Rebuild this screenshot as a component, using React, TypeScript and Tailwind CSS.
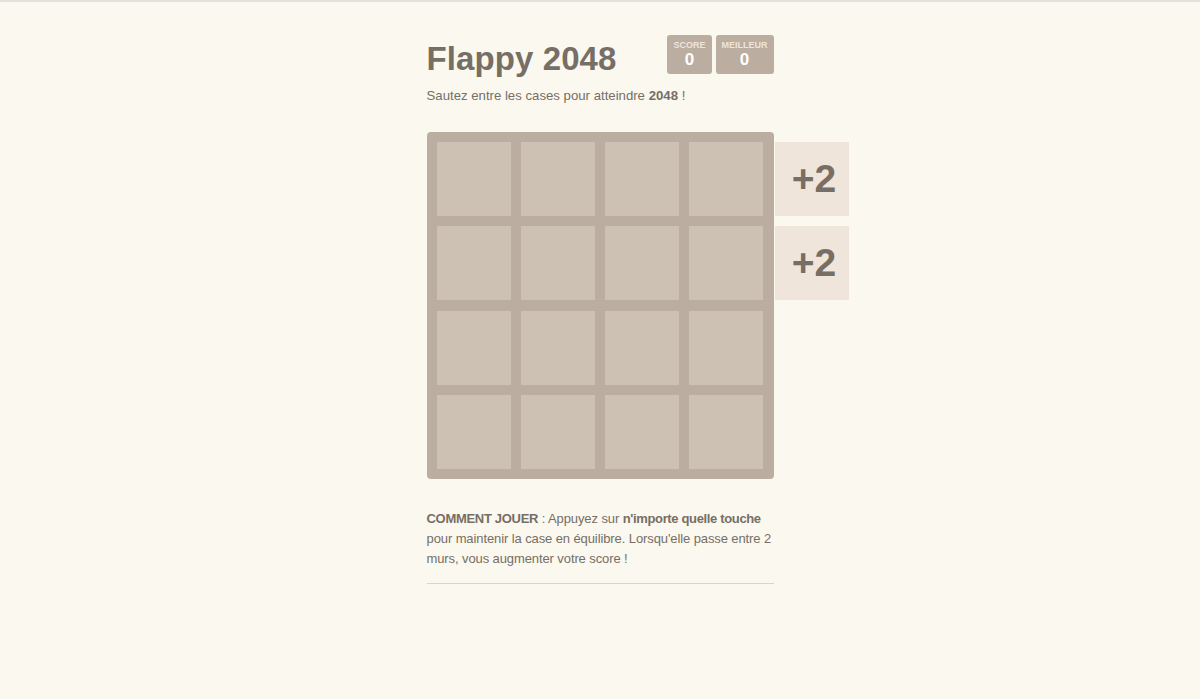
import React from "react";

const cells = Array.from({ length: 16 });

const ScoreBox = ({ label, value }: { label: string; value: number }) => (
  <div className="bg-[#bbada0] rounded-[3px] h-[39px] px-[6px] flex flex-col items-center justify-center min-w-[44px]">
    <span className="text-[9px] leading-[10px] font-bold uppercase text-[#eee4da]">{label}</span>
    <span className="text-[17px] leading-[19px] font-bold text-white">{value}</span>
  </div>
);

const Jump = ({ top }: { top: string }) => (
  <div
    className={`absolute left-[348px] ${top} w-[74px] h-[74px] bg-[#f0e5da] flex items-center justify-center pl-[5px] text-[39px] font-bold`}
  >
    +2
  </div>
);

export default function App() {
  return (
    <div
      className="min-h-[699px] bg-[#faf8ef] text-[#776e65] border-t-2 border-[#e3e1dc]"
      style={{ fontFamily: '"Liberation Sans", Arial, sans-serif' }}
    >
      <div className="w-[347px] mx-auto pt-[33px]">
        {/* HEADER */}
        <div className="flex items-start justify-between">
          <h1 className="text-[33px] leading-[46px] font-bold mt-[1px] tracking-[0.1px]">Flappy 2048</h1>
          <div className="flex gap-[4px]">
            <ScoreBox label="Score" value={0} />
            <ScoreBox label="Meilleur" value={0} />
          </div>
        </div>
        <p className="text-[13.2px] leading-[20px] mt-[4px]">
          Sautez entre les cases pour atteindre <b>2048</b> !
        </p>

        {/* GRID */}
        <div className="relative mt-[26px]">
          <div className="bg-[#bbada0] rounded-[4px] p-[10px] grid grid-cols-4 gap-[10px] w-[347px] h-[347px]">
            {cells.map((_, i) => (
              <div key={i} className="bg-[#cdc1b4] w-[74px] h-[74px]" />
            ))}
          </div>
          <Jump top="top-[10px]" />
          <Jump top="top-[94px]" />
        </div>

        {/* HOW TO */}
        <p className="text-[13px] leading-[20px] mt-[30px] tracking-[-0.1px]">
          <b className="tracking-[-0.3px]">COMMENT JOUER</b> : Appuyez sur{" "}
          <b className="tracking-[-0.35px]">n'importe quelle touche</b> pour maintenir la case en
          équilibre. Lorsqu'elle passe entre 2 murs, vous augmenter votre score !
        </p>
        <hr className="mt-[14px] border-t border-[#d8d4d0]" />
      </div>
    </div>
  );
}
